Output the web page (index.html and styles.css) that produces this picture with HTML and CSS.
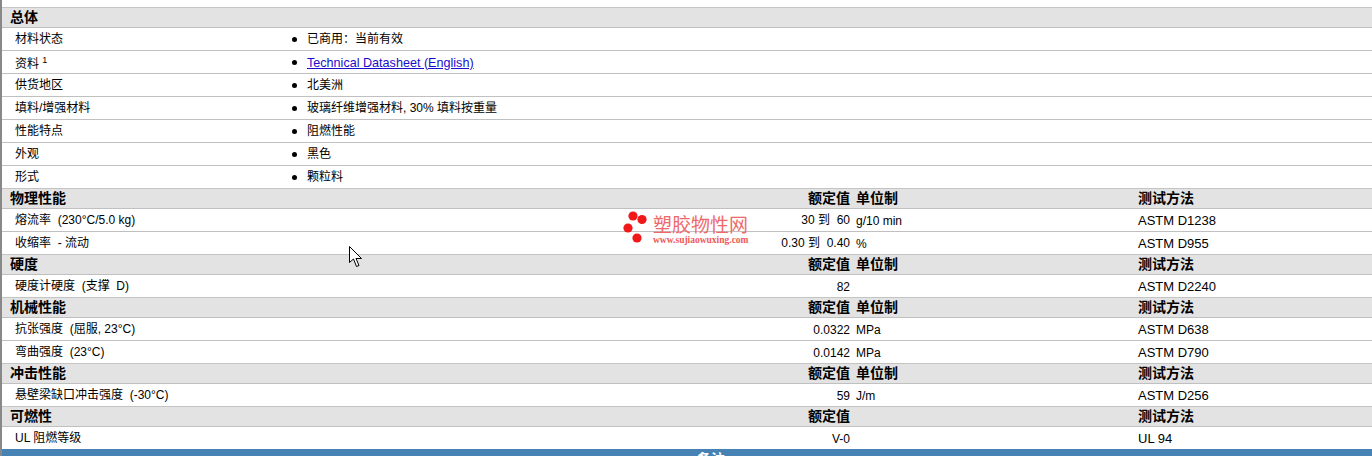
FILE: index.html
```html
<!DOCTYPE html>
<html lang="zh">
<head>
<meta charset="utf-8">
<title>物性表</title>
<link rel="stylesheet" href="styles.css">
</head>
<body>
<main class="sheet">
  <div class="row head"><div class="h-name">总体</div></div>
  <div class="row info"><div class="name">材料状态</div><div class="bullet cjk tc">已商用：当前有效</div></div>
  <div class="row info"><div class="name-sup">资料 <sup class="note">1</sup></div><div class="bullet latin"><a href="#">Technical Datasheet (English)</a></div></div>
  <div class="row info"><div class="name">供货地区</div><div class="bullet cjk">北美洲</div></div>
  <div class="row info"><div class="name">填料/增强材料</div><div class="bullet cjk">玻璃纤维增强材料, 30% 填料按重量</div></div>
  <div class="row info"><div class="name">性能特点</div><div class="bullet cjk">阻燃性能</div></div>
  <div class="row info"><div class="name">外观</div><div class="bullet cjk">黑色</div></div>
  <div class="row info"><div class="name">形式</div><div class="bullet cjk">颗粒料</div></div>

  <div class="row head data"><div class="h-name">物理性能</div><div class="val">额定值</div><div class="unit">单位制</div><div class="test">测试方法</div></div>
  <div class="row data"><div class="name">熔流率&nbsp; (230°C/5.0 kg)</div><div class="val cjk">30 到&nbsp; 60</div><div class="unit">g/10 min</div><div class="test">ASTM D1238</div></div>
  <div class="row data"><div class="name">收缩率&nbsp; - 流动</div><div class="val cjk">0.30 到&nbsp; 0.40</div><div class="unit">%</div><div class="test">ASTM D955</div></div>

  <div class="row head data"><div class="h-name">硬度</div><div class="val">额定值</div><div class="unit">单位制</div><div class="test">测试方法</div></div>
  <div class="row data"><div class="name">硬度计硬度&nbsp; (支撑&nbsp; D)</div><div class="val">82</div><div class="unit"></div><div class="test">ASTM D2240</div></div>

  <div class="row head data"><div class="h-name">机械性能</div><div class="val">额定值</div><div class="unit">单位制</div><div class="test">测试方法</div></div>
  <div class="row data"><div class="name">抗张强度&nbsp; (屈服, 23°C)</div><div class="val">0.0322</div><div class="unit">MPa</div><div class="test">ASTM D638</div></div>
  <div class="row data"><div class="name">弯曲强度&nbsp; (23°C)</div><div class="val">0.0142</div><div class="unit">MPa</div><div class="test">ASTM D790</div></div>

  <div class="row head data"><div class="h-name">冲击性能</div><div class="val">额定值</div><div class="unit">单位制</div><div class="test">测试方法</div></div>
  <div class="row data"><div class="name">悬壁梁缺口冲击强度&nbsp; (-30°C)</div><div class="val">59</div><div class="unit">J/m</div><div class="test">ASTM D256</div></div>

  <div class="row head data"><div class="h-name">可燃性</div><div class="val">额定值</div><div class="unit"></div><div class="test">测试方法</div></div>
  <div class="row data"><div class="name">UL 阻燃等级</div><div class="val">V-0</div><div class="unit"></div><div class="test">UL 94</div></div>

  <div class="notes">备注</div>
</main>

<div class="mark">
  <svg class="mark-dots" width="32" height="36" viewBox="0 0 32 36" aria-hidden="true">
    <circle cx="10" cy="6" r="4.6" fill="#f01818"/>
    <circle cx="19" cy="9.500" r="4.6" fill="#f01818"/>
    <circle cx="5" cy="18" r="4.600" fill="#f01818"/>
    <circle cx="14" cy="28" r="4.600" fill="#f01818"/>
  </svg>
  <div class="mark-text">
    <div class="mark-cn">塑胶物性网</div>
    <div class="mark-url">www.sujiaowuxing.com</div>
  </div>
</div>

<svg class="cursor" width="14" height="23" viewBox="0 0 14 23" aria-hidden="true">
  <path d="M0.500 0.500V16.500L4.500 13L7.500 20.500L10 19.500L7 12.500H12.500Z" fill="#fff" stroke="#000" stroke-width="1"/>
</svg>
</body>
</html>
```
FILE: styles.css
```css
html, body {
  margin: 0;
  padding: 0;
  height: 456px;
  overflow: hidden;
  background: #fff;
}
body {
  position: relative;
  font-family: "Liberation Sans", "Noto Sans CJK SC", sans-serif;
  font-size: 12px;
  color: #000;
}
.sheet {
  border-left: 2px solid #888;
  padding-top: 7px;
  height: 449px;
}
.row {
  display: grid;
  align-items: center;
  box-sizing: border-box;
  height: 23px;
  border-top: 1px solid #c0c0c0;
  white-space: nowrap;
}
.info {
  grid-template-columns: 289px 1fr;
}
.data {
  grid-template-columns: 1fr 100px 288px 234px;
}
.data > .val,
.data > .unit {
  padding-top: 2px;
}
.data > .cjk {
  padding-top: 0;
  padding-bottom: 3px;
}
.head {
  height: 20px;
  align-items: start;
  background: #e3e3e3;
  border-top-color: #c4c4c4;
  font-weight: 700;
  font-size: 14px;
  line-height: 14px;
}
.head > div,
.head.data > .val,
.head.data > .unit {
  padding-top: 2px;
}
.h-name {
  padding-left: 8px;
}
.name,
.name-sup {
  padding-left: 13px;
}
.name {
  padding-bottom: 3px;
}
.note {
  font-size: 9px;
  line-height: 0;
  vertical-align: 5px;
}
.bullet {
  display: flex;
  align-items: center;
}
.bullet.cjk {
  padding-bottom: 3px;
}
.bullet.latin {
  padding-top: 1px;
  font-size: 12.6px;
}
.bullet.tc {
  font-family: "Liberation Sans", "Noto Sans CJK TC", sans-serif;
}
.bullet::before {
  content: "";
  width: 5px;
  height: 5px;
  margin: 0 10px 0 1px;
  border-radius: 50%;
  background: #000;
}
.bullet.cjk::before {
  position: relative;
  top: 2px;
}
.bullet a {
  color: #1a0dcc;
}
.val {
  text-align: right;
}
.unit {
  padding-left: 6px;
}
.test {
  font-size: 13px;
}
.head .test {
  font-size: 14px;
}
.notes {
  height: 20px;
  box-sizing: border-box;
  padding-left: 48px;
  background: #4682b4;
  color: #fff;
  font-size: 14px;
  font-weight: 700;
  line-height: 20px;
  text-align: center;
}
.mark {
  position: absolute;
  left: 623px;
  top: 210px;
  display: flex;
}
.mark-dots {
  flex: none;
}
.mark-text {
  margin-top: 6px;
  margin-left: -2px;
}
.mark-cn {
  font-size: 19px;
  line-height: 20px;
  color: #ee6a6a;
}
.mark-url {
  font-family: "Liberation Serif", serif;
  font-size: 9.5px;
  font-weight: 700;
  line-height: 9px;
  color: #ee5a5a;
  white-space: nowrap;
}
.cursor {
  position: absolute;
  left: 349px;
  top: 246px;
}
```
